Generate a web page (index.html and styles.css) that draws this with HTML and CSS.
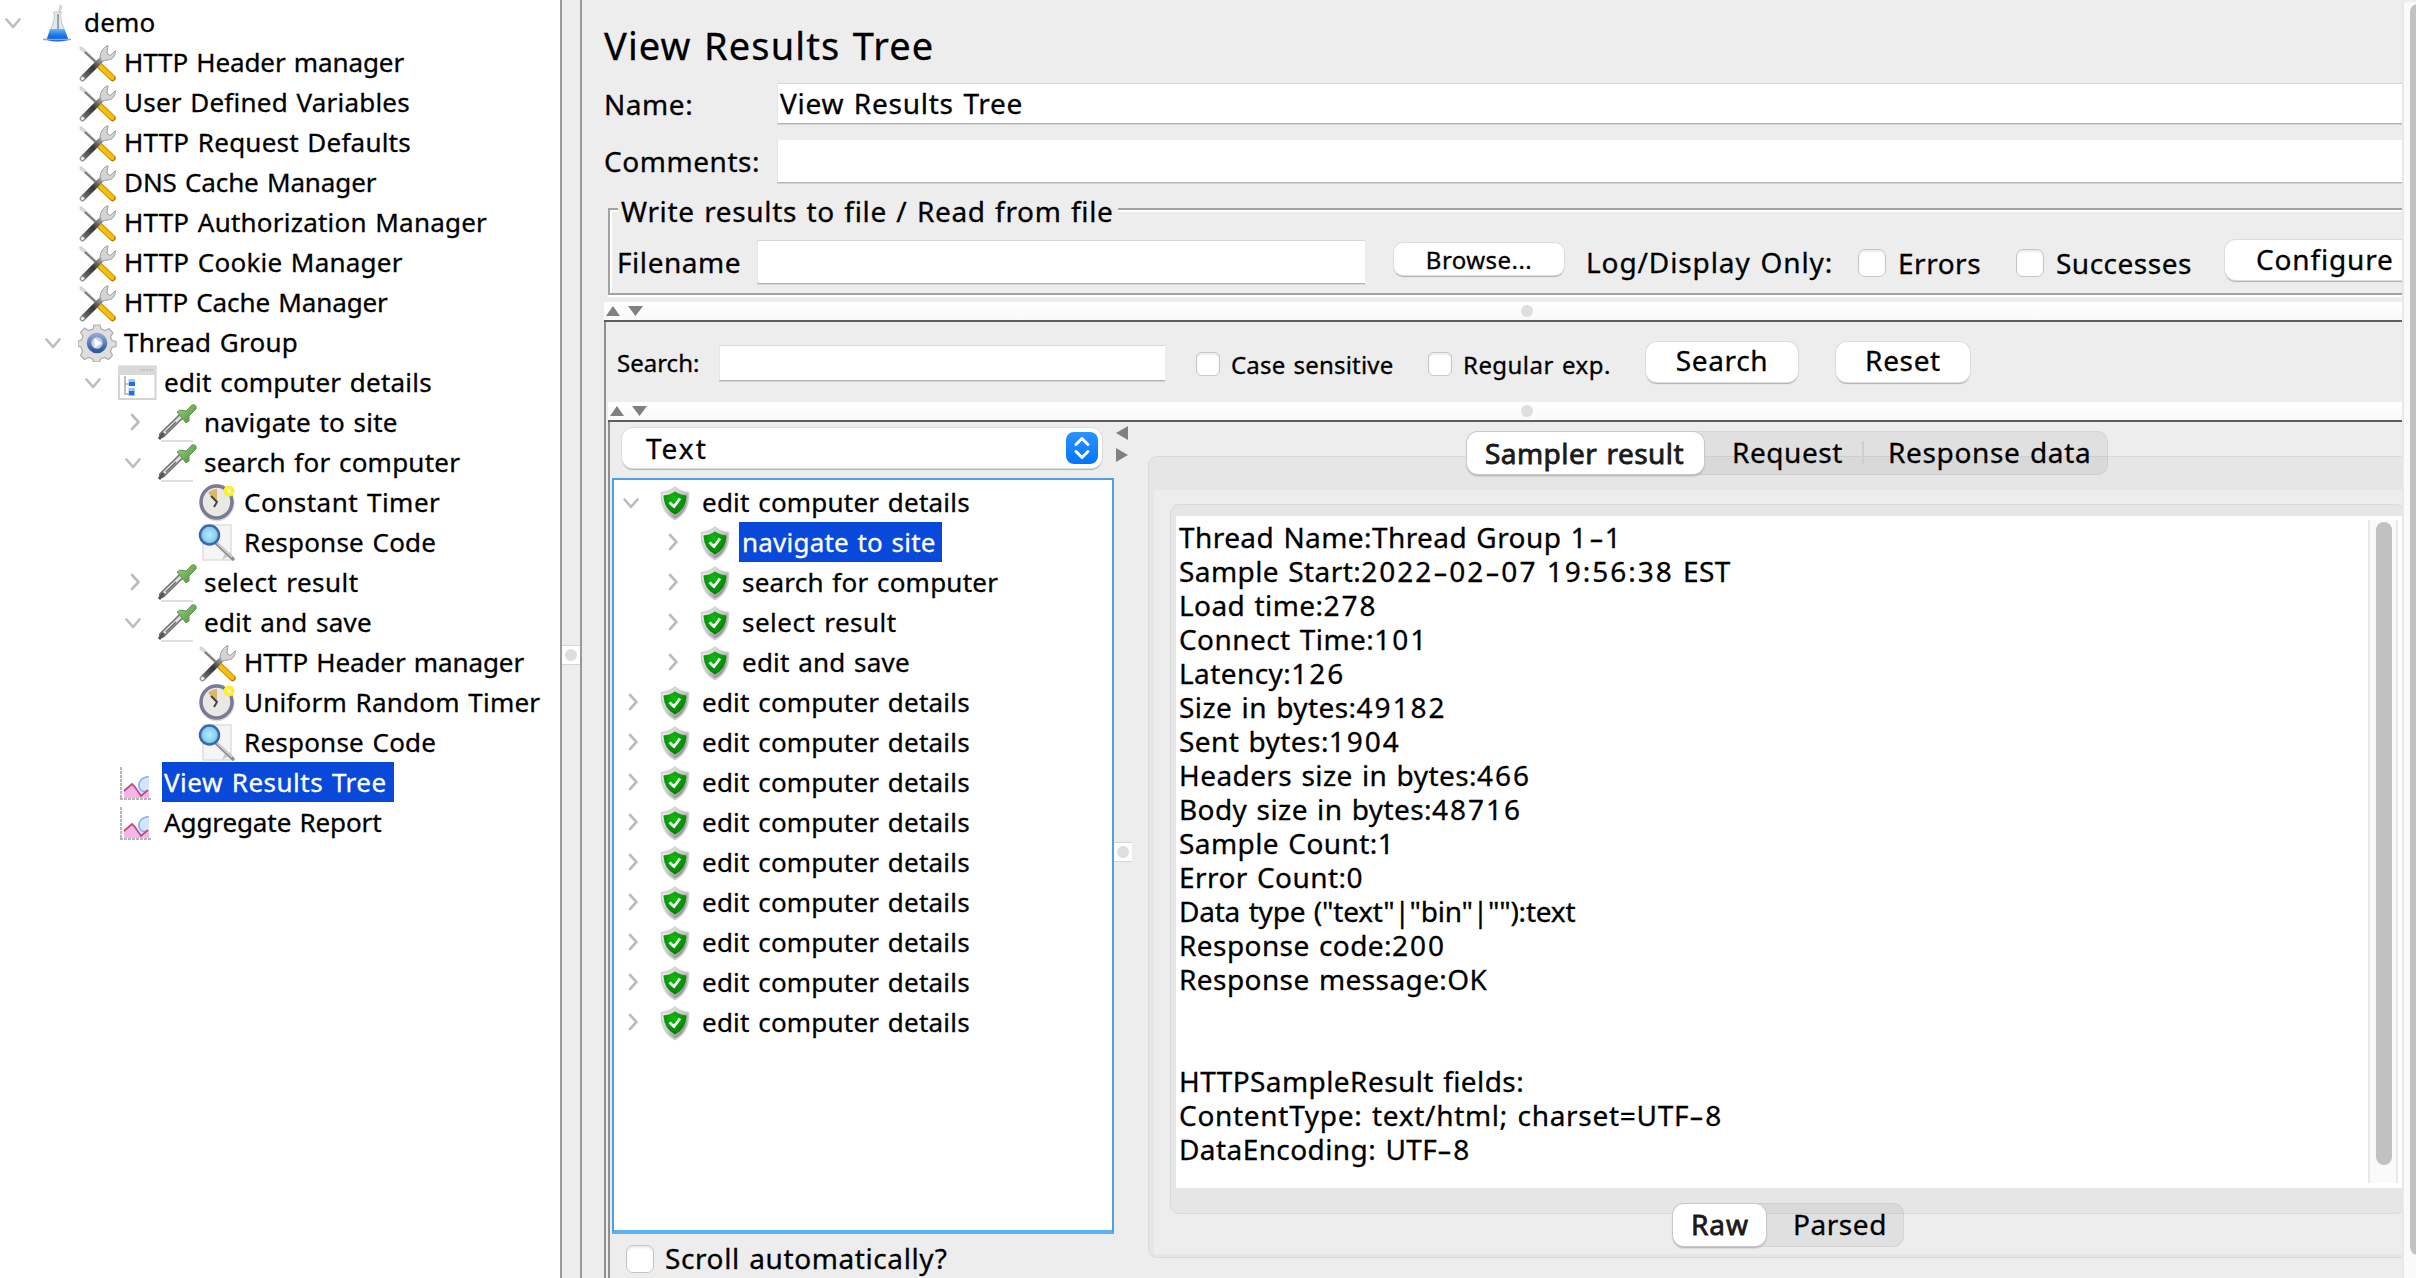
FILE: index.html
```html
<!DOCTYPE html>
<html lang="en">
<head>
<meta charset="utf-8">
<title>View Results Tree</title>
<link rel="stylesheet" href="styles.css">
</head>
<body>
<svg class="defs" width="0" height="0" aria-hidden="true">
  <defs>
    <linearGradient id="g-flask" x1="0" y1="0" x2="0" y2="1"><stop offset="0" stop-color="#6db4f4"/><stop offset=".5" stop-color="#1878e8"/><stop offset="1" stop-color="#0a55c8"/></linearGradient>
    <linearGradient id="g-shaft" x1="1" y1="0" x2="0" y2="1"><stop offset="0" stop-color="#c4c4c4"/><stop offset=".5" stop-color="#333"/><stop offset="1" stop-color="#777"/></linearGradient>
    <linearGradient id="g-ring" x1="0" y1="0" x2="0" y2="1"><stop offset="0" stop-color="#8aa6cf"/><stop offset="1" stop-color="#2f5a9c"/></linearGradient>
    <linearGradient id="g-bulb" x1="0" y1="0" x2="1" y2="1"><stop offset="0" stop-color="#9fd088"/><stop offset="1" stop-color="#4a8f3c"/></linearGradient>
    <linearGradient id="g-shield" x1="0" y1="0" x2="1" y2="1"><stop offset="0" stop-color="#f4f4f4"/><stop offset=".5" stop-color="#c4c4c4"/><stop offset="1" stop-color="#777"/></linearGradient>
    <radialGradient id="g-green" cx=".45" cy=".3" r=".7"><stop offset="0" stop-color="#10bb10"/><stop offset="1" stop-color="#007c00"/></radialGradient>
    <radialGradient id="g-lens"><stop offset="0" stop-color="#b8ecfb"/><stop offset="1" stop-color="#74c3ea"/></radialGradient>
    <symbol id="open" viewBox="0 0 26 40"><path d="M6.500 17.500 13 25l6.500-7.500" fill="none" stroke="#bcbcbc" stroke-width="2.600" stroke-linecap="round" stroke-linejoin="round"/></symbol>
    <symbol id="closed" viewBox="0 0 26 40"><path d="M12 13l6.500 7-6.500 7" fill="none" stroke="#bcbcbc" stroke-width="2.600" stroke-linecap="round" stroke-linejoin="round"/></symbol>
    <symbol id="flask" viewBox="0 0 40 40">
      <path d="M16.500 13q-1-1-1-3h8q0 2-1 3l1 7 6 17H9.500l6-17z" fill="#e3e8ea" stroke="#c3c9cc"/>
      <path d="M21.500 10l1.500-7" stroke="#d0d0d0" stroke-width="2.500"/>
      <path d="M12 27h14.500l4 11q-11 3-22 0z" fill="url(#g-flask)"/>
      <path d="M20 12v16" stroke="#9aa3a8" stroke-width="2"/>
      <path d="M5 37.500h28" stroke="#8aa5cc" stroke-width="1.500"/>
    </symbol>
    <symbol id="tools" viewBox="0 0 40 40">
      <path d="M3 6l17 16" stroke="#d6d6d6" stroke-width="3.500" stroke-linecap="round"/>
      <path d="M7 10l13 12" stroke="#777" stroke-width="1.800"/>
      <path d="M22 24l12.500 12" stroke="#b87e00" stroke-width="6.500" stroke-linecap="round"/>
      <path d="M22 24l12 11.500" stroke="#f6bd0b" stroke-width="4.800" stroke-linecap="round"/>
      <path d="M4.500 36.500L26 15" stroke="url(#g-shaft)" stroke-width="5.500" stroke-linecap="round"/>
      <circle cx="4.500" cy="36.500" r="2" fill="#eee" stroke="#999"/>
      <path d="M22 15q1-9 8-11.500l-1 8 3.500 2 5-5q0 8.500-7.500 9.500-4 0-6 1.500z" fill="#d4d4d4" stroke="#a0a0a0" stroke-width="1"/>
    </symbol>
    <symbol id="gear" viewBox="0 0 40 40">
      <path d="M16 3h6l1 4 4 1.500 4-2 4 4.500-2.500 3.500 1.500 4 4 1v5l-4 1-1.500 4 2 4-4 4-4-2-4 1.500-1 3h-6l-1-3-4-1.500-4 2-4-4 2-4L3 25l-3-1v-5l3.500-1L5 14l-2.500-3.500L6.500 6l4 2.500L15 7z" fill="#dedede" stroke="#ababab" stroke-width="1.200"/>
      <circle cx="19" cy="21" r="8" fill="#c3d2ea" stroke="url(#g-ring)" stroke-width="4.500"/>
      <path d="M16.500 16l7 5-7 5z" fill="#fff"/>
    </symbol>
    <symbol id="window" viewBox="0 0 40 40">
      <path d="M1 4.500h36.500v32.500H1z" fill="#fff" stroke="#d4d4d4" stroke-width="2"/>
      <path d="M0 4h38.500v9H0z" fill="#d9d9d9"/><path d="M22 8h13" stroke="#c2c2c2" stroke-width="2" stroke-dasharray="2 1"/>
      <path d="M7 14v18h4M7 22h4" fill="none" stroke="#aaa" stroke-width="1.500"/>
      <path d="M10.500 17h6.500v7h-6.500zM10.500 26h6.500v8h-6.500z" fill="#9cc5f5"/>
      <path d="M11 20h6v4h-6zM11 29h5v4h-5z" fill="#1f72de"/>
    </symbol>
    <symbol id="pipette" viewBox="0 0 40 40">
      <path d="M3 39h32" stroke="#d4d4d4" stroke-width="1.500"/>
      <path d="M4 33L23 14.500" stroke="#777" stroke-width="6" stroke-linecap="round"/>
      <path d="M1 37L6 31" stroke="#555" stroke-width="3"/>
      <path d="M6 31L23 14.500" stroke="#e0e0e0" stroke-width="3"/>
      <path d="M8 30l10-10" stroke="#666" stroke-width="1.200"/>
      <path d="M19 10l3-2 6 1 6-6q5-1 4 4l-7 7v5l-3 2z" fill="url(#g-bulb)" stroke="#5d9a4c" stroke-width="1"/>
    </symbol>
    <symbol id="timer" viewBox="0 0 40 40">
      <ellipse cx="19" cy="21" rx="16" ry="17" fill="none" stroke="#ddd" stroke-width="3"/>
      <ellipse cx="18.500" cy="20" rx="15.500" ry="16" fill="#e9e8e4" stroke="#7c7996" stroke-width="3.500"/>
      <path d="M19 20L10 11q4-4 9-4z" fill="#d8b96a"/>
      <path d="M13 14l6 6-3 5" fill="none" stroke="#444" stroke-width="2"/>
      <circle cx="31" cy="9" r="5.500" fill="#ffee2e"/><circle cx="31" cy="9" r="2" fill="#fffbc4"/>
    </symbol>
    <symbol id="lens" viewBox="0 0 40 40">
      <path d="M5 3h28v35H5z" fill="#f5f5f5" stroke="#dedede" stroke-width="1.500"/>
      <path d="M24 38l4-9 6 3" fill="#ccc"/>
      <path d="M18 21l17 16" stroke="#8b8f94" stroke-width="3.500" stroke-linecap="round"/>
      <path d="M19 21l15 14" stroke="#ddd" stroke-width="1.200"/>
      <ellipse cx="11.500" cy="13" rx="9.500" ry="9.500" fill="url(#g-lens)" stroke="#3d68a6" stroke-width="2.500"/>
    </symbol>
    <symbol id="chart" viewBox="0 0 40 40">
      <path d="M3 5v33M2 37h32" fill="none" stroke="#b5b5b5" stroke-width="2" stroke-dasharray="3 1"/>
      <path d="M31 14q-12 2-11 12l4 8 7-4z" fill="#d5e6fb"/>
      <path d="M31 14.500q-11 1.500-10 10.500 2 6 9 4" fill="none" stroke="#8bb4ee" stroke-width="1.600"/>
      <path d="M6 36v-7l8-7 10 11 7-5v8z" fill="#f6b4ea"/>
      <path d="M6 29l8-7 3 3 6 9 7-6" fill="none" stroke="#bd4c80" stroke-width="1.800"/>
    </symbol>
    <symbol id="shield" viewBox="0 0 40 40">
      <path d="M20 5q6 5 13.500 5.500Q34.500 30 20 37.500 5.500 30 6.500 10.500 14 10 20 5z" fill="url(#g-shield)" stroke="#cfcfcf" stroke-width="1.500"/>
      <path d="M20 9.500q5 3.500 11.500 4Q31 27 20 32.500 9 27 8.500 13.500 15 13 20 9.500z" fill="url(#g-green)"/>
      <path d="M14.500 20.500l4.500 4 6-8" fill="none" stroke="#fff" stroke-width="2.800"/>
    </symbol>
  </defs>
</svg>

<nav class="plan">
  <div class="node l0"><svg class="chev"><use href="#open"/></svg><svg class="ico"><use href="#flask"/></svg><span class="label">demo</span></div>
  <div class="node l1"><i class="chev"></i><svg class="ico"><use href="#tools"/></svg><span class="label tight">HTTP Header manager</span></div>
  <div class="node l1"><i class="chev"></i><svg class="ico"><use href="#tools"/></svg><span class="label">User Defined Variables</span></div>
  <div class="node l1"><i class="chev"></i><svg class="ico"><use href="#tools"/></svg><span class="label">HTTP Request Defaults</span></div>
  <div class="node l1"><i class="chev"></i><svg class="ico"><use href="#tools"/></svg><span class="label tight">DNS Cache Manager</span></div>
  <div class="node l1"><i class="chev"></i><svg class="ico"><use href="#tools"/></svg><span class="label">HTTP Authorization Manager</span></div>
  <div class="node l1"><i class="chev"></i><svg class="ico"><use href="#tools"/></svg><span class="label">HTTP Cookie Manager</span></div>
  <div class="node l1"><i class="chev"></i><svg class="ico"><use href="#tools"/></svg><span class="label tight">HTTP Cache Manager</span></div>
  <div class="node l1"><svg class="chev"><use href="#open"/></svg><svg class="ico"><use href="#gear"/></svg><span class="label">Thread Group</span></div>
  <div class="node l2"><svg class="chev"><use href="#open"/></svg><svg class="ico"><use href="#window"/></svg><span class="label">edit computer details</span></div>
  <div class="node l3"><svg class="chev"><use href="#closed"/></svg><svg class="ico"><use href="#pipette"/></svg><span class="label">navigate to site</span></div>
  <div class="node l3"><svg class="chev"><use href="#open"/></svg><svg class="ico"><use href="#pipette"/></svg><span class="label">search for computer</span></div>
  <div class="node l4"><i class="chev"></i><svg class="ico"><use href="#timer"/></svg><span class="label loose">Constant Timer</span></div>
  <div class="node l4"><i class="chev"></i><svg class="ico"><use href="#lens"/></svg><span class="label">Response Code</span></div>
  <div class="node l3"><svg class="chev"><use href="#closed"/></svg><svg class="ico"><use href="#pipette"/></svg><span class="label loose">select result</span></div>
  <div class="node l3"><svg class="chev"><use href="#open"/></svg><svg class="ico"><use href="#pipette"/></svg><span class="label">edit and save</span></div>
  <div class="node l4"><i class="chev"></i><svg class="ico"><use href="#tools"/></svg><span class="label tight">HTTP Header manager</span></div>
  <div class="node l4"><i class="chev"></i><svg class="ico"><use href="#timer"/></svg><span class="label">Uniform Random Timer</span></div>
  <div class="node l4"><i class="chev"></i><svg class="ico"><use href="#lens"/></svg><span class="label">Response Code</span></div>
  <div class="node l2"><i class="chev"></i><svg class="ico"><use href="#chart"/></svg><span class="label selected loose">View Results Tree</span></div>
  <div class="node l2"><i class="chev"></i><svg class="ico"><use href="#chart"/></svg><span class="label tight">Aggregate Report</span></div>
</nav>

<div class="divider"><span class="knob"></span></div>

<main class="editor">
  <h1 class="title">View Results Tree</h1>
  <div class="row name-row"><label class="caption">Name:</label><div class="field grow">View Results Tree</div></div>
  <div class="row comments-row"><label class="caption">Comments:</label><div class="field grow soft"></div></div>

  <section class="group">
    <div class="legend">Write results to file / Read from file</div>
    <div class="row file-row">
      <span class="filename">Filename</span>
      <div class="field file-field"></div>
      <div class="button small browse">Browse...</div>
      <span class="log-only">Log/Display Only:</span>
      <span class="check"></span><span class="check-text errors">Errors</span>
      <span class="check"></span><span class="check-text successes">Successes</span>
      <div class="button configure">Configure</div>
    </div>
  </section>

  <div class="hsplit"><svg class="arrows" viewBox="0 0 40 18"><path d="M2 14l7-10 7 10zM24 4h15l-7.500 10z" fill="#808080"/></svg><span class="dot"></span></div>
  <div class="pane outer">
    <div class="row search-row">
      <span class="search-label">Search:</span>
      <div class="field search-field"></div>
      <span class="check mini"></span><span class="mini-text case">Case sensitive</span>
      <span class="check mini"></span><span class="mini-text regex">Regular exp.</span>
      <div class="button search">Search</div>
      <div class="button reset">Reset</div>
    </div>
    <div class="hsplit second"><svg class="arrows" viewBox="0 0 40 18"><path d="M2 14l7-10 7 10zM24 4h15l-7.500 10z" fill="#808080"/></svg><span class="dot"></span></div>
    <div class="pane inner">
      <div class="results">
        <div class="combo"><span class="combo-text">Text</span><svg class="stepper" viewBox="0 0 32 32"><path d="M10 12.500L16 6.500l6 6M10 19.500l6 6 6-6" fill="none" stroke="#fff" stroke-width="3" stroke-linecap="round" stroke-linejoin="round"/></svg></div>
        <div class="list">
          <div class="node l0"><svg class="chev"><use href="#open"/></svg><svg class="ico"><use href="#shield"/></svg><span class="label">edit computer details</span></div>
          <div class="node l1"><svg class="chev"><use href="#closed"/></svg><svg class="ico"><use href="#shield"/></svg><span class="label selected">navigate to site</span></div>
          <div class="node l1"><svg class="chev"><use href="#closed"/></svg><svg class="ico"><use href="#shield"/></svg><span class="label">search for computer</span></div>
          <div class="node l1"><svg class="chev"><use href="#closed"/></svg><svg class="ico"><use href="#shield"/></svg><span class="label loose">select result</span></div>
          <div class="node l1"><svg class="chev"><use href="#closed"/></svg><svg class="ico"><use href="#shield"/></svg><span class="label">edit and save</span></div>
          <div class="node l0"><svg class="chev"><use href="#closed"/></svg><svg class="ico"><use href="#shield"/></svg><span class="label">edit computer details</span></div>
          <div class="node l0"><svg class="chev"><use href="#closed"/></svg><svg class="ico"><use href="#shield"/></svg><span class="label">edit computer details</span></div>
          <div class="node l0"><svg class="chev"><use href="#closed"/></svg><svg class="ico"><use href="#shield"/></svg><span class="label">edit computer details</span></div>
          <div class="node l0"><svg class="chev"><use href="#closed"/></svg><svg class="ico"><use href="#shield"/></svg><span class="label">edit computer details</span></div>
          <div class="node l0"><svg class="chev"><use href="#closed"/></svg><svg class="ico"><use href="#shield"/></svg><span class="label">edit computer details</span></div>
          <div class="node l0"><svg class="chev"><use href="#closed"/></svg><svg class="ico"><use href="#shield"/></svg><span class="label">edit computer details</span></div>
          <div class="node l0"><svg class="chev"><use href="#closed"/></svg><svg class="ico"><use href="#shield"/></svg><span class="label">edit computer details</span></div>
          <div class="node l0"><svg class="chev"><use href="#closed"/></svg><svg class="ico"><use href="#shield"/></svg><span class="label">edit computer details</span></div>
          <div class="node l0"><svg class="chev"><use href="#closed"/></svg><svg class="ico"><use href="#shield"/></svg><span class="label">edit computer details</span></div>
        </div>
        <div class="row scroll-row"><span class="check"></span><span class="scroll-text">Scroll automatically?</span></div>
      </div>
      <div class="vsplit"><svg class="varrows" viewBox="0 0 18 40"><path d="M14 4v14L2 11zM2 26v14l12-7z" fill="#808080"/></svg><span class="knob"></span></div>
      <div class="detail">
        <div class="tab-panel">
          <div class="tab-body">
            <div class="text-panel">
              <div class="text-view">
                <div class="log">
                  <p>Thread Name:Thread Group <b>1<i class="dash">-</i>1</b></p>
                  <p>Sample Start:<b>2022<i class="dash">-</i>02<i class="dash">-</i>07</b> <b>19:56:38</b> EST</p>
                  <p>Load time:<b>278</b></p>
                  <p>Connect Time:<b>101</b></p>
                  <p>Latency:<b>126</b></p>
                  <p>Size in bytes:<b>49182</b></p>
                  <p>Sent bytes:<b>1904</b></p>
                  <p>Headers size in bytes:<b>466</b></p>
                  <p>Body size in bytes:<b>48716</b></p>
                  <p>Sample Count:<b>1</b></p>
                  <p>Error Count:<b>0</b></p>
                  <p class="narrow">Data type ("text"|"bin"|""):text</p>
                  <p>Response code:<b>200</b></p>
                  <p>Response message:OK</p>
                  <p></p>
                  <p></p>
                  <p>HTTPSampleResult fields:</p>
                  <p class="wide">ContentType: text/html; charset=UTF<i class="dash">-</i>8</p>
                  <p>DataEncoding: UTF<i class="dash">-</i>8</p>
                </div>
                <div class="scrollbar"><span class="thumb"></span></div>
              </div>
            </div>
          </div>
        </div>
        <div class="tabs top-tabs"><span class="tab active t1">Sampler result</span><span class="tab t2">Request</span><span class="tab t3">Response data</span></div>
        <div class="tabs bottom-tabs"><span class="tab active b1">Raw</span><span class="tab b2">Parsed</span></div>
      </div>
    </div>
  </div>
</main>
<div class="page-scroll"><span class="page-thumb"></span></div>
</body>
</html>
```
FILE: styles.css
```css
* { box-sizing: border-box; }
body {
  margin: 0;
  width: 2416px;
  height: 1278px;
  overflow: hidden;
  display: flex;
  background: #ededed;
  color: #000;
  font-family: "Noto Sans", "Open Sans", sans-serif;
  font-size: 28px;
  line-height: 40px;
  letter-spacing: 0.55px;
  word-spacing: 0.056em;
  white-space: nowrap;
  -webkit-text-stroke: 0.3px currentColor;
}
.defs { position: absolute; }

/* trees */
.plan { width: 560px; flex: none; background: #fff; padding-top: 2px; }
.node { display: flex; height: 40px; font-size: 26px; letter-spacing: 0.22px; }
.chev { width: 26px; height: 40px; flex: none; margin-right: 12px; }
.ico { width: 40px; height: 40px; flex: none; margin-right: 4px; }
.label { padding: 0 7px 0 2px; height: 40px; }
.tight { letter-spacing: -0.1px; }
.loose { letter-spacing: 0.5px; }
.selected { background: #0849d9; color: #fff; }
.l1 { padding-left: 40px; }
.l2 { padding-left: 80px; }
.l3 { padding-left: 120px; }
.l4 { padding-left: 160px; }

.divider {
  width: 22px; flex: none;
  border: solid #999; border-width: 0 2px;
  padding-top: 645px;
}
.knob {
  display: flex; align-items: center; justify-content: center;
  width: 18px; height: 20px;
  background: #fff; border: solid #d6d6d6; border-width: 1px 0;
}
.knob::before { content: ""; width: 12px; height: 12px; border-radius: 50%; background: #dedede; }

/* editor */
.editor { width: 1820px; flex: none; padding-left: 22px; overflow: hidden; display: flex; flex-direction: column; }
.title { margin: 0; height: 83px; padding: 20px 0 0; font-size: 38px; font-weight: 400; line-height: 50px; letter-spacing: 1.1px; flex: none; }
.row { display: flex; align-items: center; flex: none; }
.grow { flex: 1; }
.caption { width: 173px; flex: none; }
.name-row { height: 41px; margin-bottom: 14px; }
.name-row .field { height: 41px; line-height: 39px; letter-spacing: 0.75px; padding-left: 2px; }
.comments-row { height: 45px; }
.field {
  flex: none; background: #fff;
  border-top: 1px solid #d8d8d8; border-left: 1px solid #e6e6e6;
  border-bottom: 1px solid #b4b4b4;
  box-shadow: 0 1px 0 #d4d4d4;
}
.name-row .grow, .comments-row .grow { flex: 1; }
.comments-row .field { height: 44px; border-top-color: #f0f0f0; }

.group {
  flex: none; height: 87px; width: 1840px; margin: 25px 0 7px 4px;
  border: 2px solid #a2a2a2;
  box-shadow: 0 2px 0 #fff, inset 2px 2px 0 #fff;
}
.legend { width: 500px; height: 30px; line-height: 30px; margin: -14px 0 0 8px; padding-left: 3px; letter-spacing: 0.65px; background: #ededed; }
.file-row { height: 45px; margin-top: 13px; padding-left: 7px; }
.filename { width: 140px; flex: none; }
.file-field { width: 608px; height: 44px; margin-right: 29px; }
.button {
  flex: none; height: 40px; line-height: 38px; text-align: center; letter-spacing: 0.65px;
  background: #fff; border-radius: 11px;
  box-shadow: 0 0 0 1px #dcdcdc, 0 1.500px 1px 0 #b0b0b0;
}
.small { height: 32px; line-height: 33px; font-size: 24px; border-radius: 9px; }
.browse { width: 170px; margin: 0 22px 6px 0; letter-spacing: 0.45px; }
.log-only { width: 272px; flex: none; letter-spacing: 0.9px; }
.check {
  flex: none; width: 28px; height: 28px; margin-top: 2px;
  background: #fff; border: 1px solid #c6c6c6; border-radius: 7px;
  box-shadow: inset 0 2px 2px #ececec;
}
.check-text { margin: 3px 0 0 12px; flex: none; letter-spacing: 0.5px; }
.errors { width: 118px; }
.successes { width: 169px; }
.configure { width: 220px; margin-bottom: 3px; padding-left: 31px; text-align: left; letter-spacing: 0.85px; }

.hsplit {
  flex: none; height: 20px; position: relative;
  background: linear-gradient(#fff, #f9f9f9);
  border-bottom: 2px solid #5e5e5e;
}
.arrows { display: block; width: 40px; height: 18px; }
.dot { position: absolute; left: 917px; top: 3px; width: 12px; height: 12px; border-radius: 50%; background: #dedede; }
.second .dot { left: 913px; }
.pane { border-left: 2px solid #8f8f8f; }
.outer { padding-left: 2px; flex: 1; }
.inner { height: 856px; display: flex; }
.search-row { height: 80px; padding: 2px 0 0 9px; font-size: 24px; letter-spacing: 0; }
.search-label { width: 102px; flex: none; }
.search-field { width: 446px; height: 36px; margin-right: 31px; }
.mini { width: 24px; height: 24px; border-radius: 6px; }
.mini-text { margin: 3px 0 0 11px; flex: none; }
.case { width: 197px; letter-spacing: 0.2px; }
.regex { width: 183px; letter-spacing: 0.45px; }
.search-row .button { font-size: 28px; line-height: 37px; margin-bottom: 2px; }
.search { width: 152px; margin-right: 38px; }
.reset { width: 134px; }

/* results column */
.results { width: 504px; flex: none; padding: 6px 0 0 2px; }
.combo {
  width: 480px; height: 40px; margin: 0 0 10px 10px; padding: 0 4px 0 24px;
  display: flex; align-items: center; justify-content: space-between;
  background: #fff; border-radius: 11px;
  box-shadow: 0 0 0 1px #dcdcdc, 0 1.500px 1px 0 #b0b0b0;
}
.combo-text { letter-spacing: 2px; }
.stepper { width: 32px; height: 32px; border-radius: 8px; background: linear-gradient(#2d92ff, #0275fb); }
.list {
  width: 502px; height: 756px; background: #fff; padding: 2px 0 0 4px;
  border: 2px solid #509fe0; border-bottom: 4px solid #5cb0f6;
}
.list .chev { margin-right: 11px; }
.list .label { padding: 0 6px 0 3px; }
.scroll-row { height: 48px; padding-left: 14px; }
.scroll-text { margin-left: 11px; letter-spacing: 0.6px; }

.vsplit { width: 18px; flex: none; }
.varrows { display: block; width: 18px; height: 40px; }
.vsplit .knob { margin-top: 380px; }

/* detail pane */
.detail { flex: 1; position: relative; padding: 34px 0 0 16px; overflow: hidden; }
.tab-panel {
  width: 1300px; height: 802px; padding: 33px 5px 3px 5px;
  background: #e6e6e6; border: 1px solid #dadada; border-radius: 9px;
}
.tab-body { height: 764px; background: #ededed; padding: 14px 0 0 16px; }
.text-panel {
  width: 1235px; height: 710px; padding: 11px 0 0 5px;
  background: #e6e6e6; border: 1px solid #dadada; border-radius: 9px;
}
.text-view { width: 1226px; height: 672px; background: #fff; display: flex; justify-content: space-between; padding: 4px 4px 5px 3px; }
.log { letter-spacing: 0.42px; }
.log p { margin: 0; height: 34px; line-height: 34px; }
.log b { font-weight: 400; letter-spacing: 2px; }
.log .narrow { letter-spacing: -0.22px; }
.log .wide { letter-spacing: 0.7px; }
.dash { display: inline-block; font-style: normal; letter-spacing: 0; transform: scaleX(1.6); margin: 0 4px 0 3px; }
.scrollbar {
  width: 30px; flex: none; padding: 2px 0 0 6px;
  background: #fafafa; border: solid #e9e9e9; border-width: 0 2px;
}
.thumb { display: block; width: 16px; height: 643px; border-radius: 8px; background: #c1c1c1; }

.tabs {
  position: absolute; display: flex; height: 44px; line-height: 43px;
  background: rgba(0, 0, 0, 0.055); border-radius: 11px;
  box-shadow: inset 0 0 0 1px rgba(0, 0, 0, 0.05);
}
.top-tabs { left: 335px; top: 9px; width: 641px; }
.bottom-tabs { left: 541px; top: 781px; width: 231px; line-height: 42px; }
.tab { position: relative; }
.active {
  height: 42px; margin-top: 1px; line-height: 42px; background: #fff; border-radius: 11px;
  box-shadow: 0 0 0 1px #c8c8c8, 0 2px 2px #aaa;
  color: #1a1a1a; -webkit-text-stroke: 0.8px #1a1a1a;
}
.t1 { width: 237px; padding-left: 18px; letter-spacing: 0.45px; }
.t2 { width: 160px; padding-left: 28px; }
.t2::after { content: ""; position: absolute; right: 0; top: 10px; width: 2px; height: 23px; background: #cfcfcf; }
.t3 { padding-left: 24px; letter-spacing: 0.65px; }
.b1 { width: 93px; padding-left: 18px; line-height: 40px; letter-spacing: 0.9px; }
.b2 { padding-left: 27px; }

.page-scroll {
  width: 14px; height: 1276px; margin-top: 2px; flex: none; padding: 2px 0 0 6px; overflow: hidden;
  background: #fafafa; border-left: 2px solid #e8e8e8;
}
.page-thumb { display: block; width: 16px; height: 1251px; border-radius: 8px; background: #c1c1c1; }
```
